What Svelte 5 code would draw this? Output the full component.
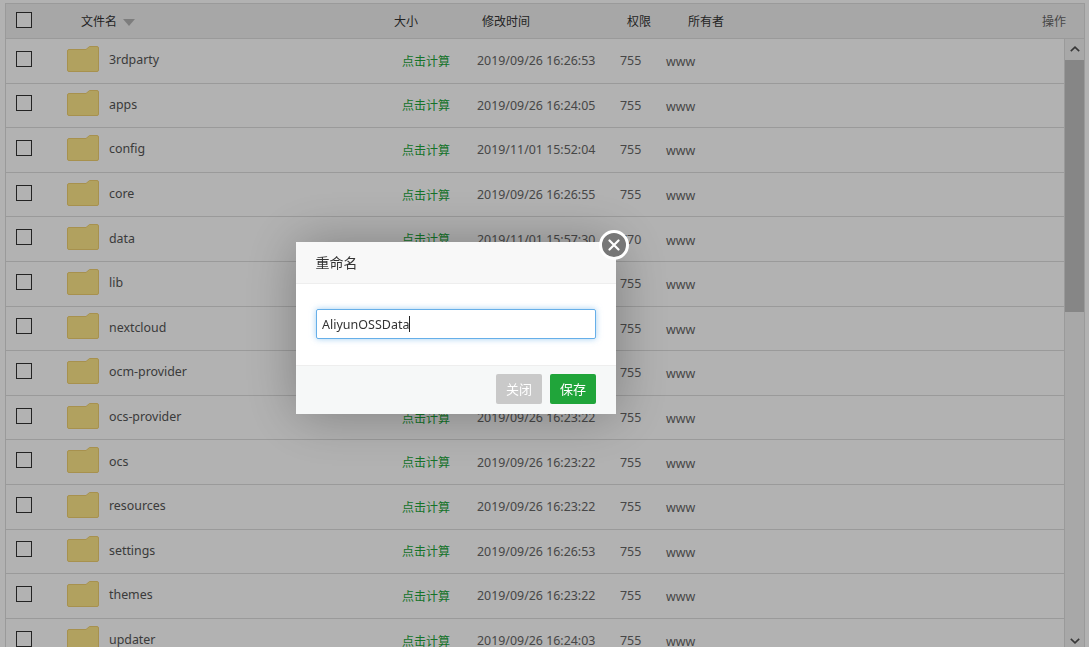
<script>
  const files = [
    { name: "3rdparty", time: "2019/09/26 16:26:53", perm: "755" },
    { name: "apps", time: "2019/09/26 16:24:05", perm: "755" },
    { name: "config", time: "2019/11/01 15:52:04", perm: "755" },
    { name: "core", time: "2019/09/26 16:26:55", perm: "755" },
    { name: "data", time: "2019/11/01 15:57:30", perm: "770" },
    { name: "lib", time: "2019/09/26 16:23:22", perm: "755" },
    { name: "nextcloud", time: "2019/09/26 16:23:22", perm: "755" },
    { name: "ocm-provider", time: "2019/09/26 16:23:22", perm: "755" },
    { name: "ocs-provider", time: "2019/09/26 16:23:22", perm: "755" },
    { name: "ocs", time: "2019/09/26 16:23:22", perm: "755" },
    { name: "resources", time: "2019/09/26 16:23:22", perm: "755" },
    { name: "settings", time: "2019/09/26 16:26:53", perm: "755" },
    { name: "themes", time: "2019/09/26 16:23:22", perm: "755" },
    { name: "updater", time: "2019/09/26 16:24:03", perm: "755" }
  ];
</script>

<div class="page">
  <div class="table">
    <div class="head">
      <span class="check"></span>
      <span class="h-name">文件名<i class="sort"></i></span>
      <span>大小</span>
      <span>修改时间</span>
      <span>权限</span>
      <span>所有者</span>
      <span class="h-ops">操作</span>
    </div>

    <div class="body">
      <div class="rows">
        {#each files as file}
          <div class="row">
            <span class="check"></span>
            <svg class="folder" viewBox="0 0 32 26" width="32" height="26">
              <path
                d="M2 3.5H19L22.5 .5H30A1.5 1.5 0 0 1 31.5 2V24A1.5 1.5 0 0 1 30 25.5H2A1.5 1.5 0 0 1 .5 24V5A1.5 1.5 0 0 1 2 3.5Z"
                fill="#fee789"
                stroke="#f0d070"
              />
            </svg>
            <span class="name">{file.name}</span>
            <span class="calc">点击计算</span>
            <span class="time">{file.time}</span>
            <span class="perm">{file.perm}</span>
            <span class="owner">www</span>
          </div>
        {/each}
      </div>

      <div class="scrollbar">
        <svg class="arrow" viewBox="0 0 10 6" width="10" height="6">
          <path d="M.8 5.2 5 1.2 9.2 5.2" fill="none" stroke="#505050" stroke-width="1.6" />
        </svg>
        <div class="thumb"></div>
        <svg class="arrow down" viewBox="0 0 10 6" width="10" height="6">
          <path d="M.8 .8 5 4.8 9.2 .8" fill="none" stroke="#505050" stroke-width="1.6" />
        </svg>
      </div>
    </div>
  </div>
</div>

<div class="overlay"></div>

<div class="modal">
  <div class="modal-title">重命名</div>
  <div class="modal-body">
    <div class="input">AliyunOSSData<span class="caret"></span></div>
  </div>
  <div class="modal-foot">
    <button class="btn close">关闭</button>
    <button class="btn save">保存</button>
  </div>
  <div class="x">
    <svg viewBox="0 0 12 12" width="12" height="12">
      <path d="M1.5 1.5 10.5 10.5M10.5 1.5 1.5 10.5" stroke="#fff" stroke-width="2.2" stroke-linecap="round" />
    </svg>
  </div>
</div>

<style>
  :global(body) {
    margin: 0;
    background: #fff;
    overflow: hidden;
  }

  .page {
    height: 647px;
    overflow: hidden;
    padding: 3px 4px 0 5px;
    box-sizing: border-box;
    font-family: "Noto Sans", "Noto Sans CJK SC", sans-serif;
    font-size: 12px;
    color: #666;
  }

  .table {
    border: 1px solid #ddd;
    border-bottom: 0;
  }

  .head {
    display: grid;
    grid-template-columns: 75px 313px 88px 145px 61px 1fr 42px;
    align-items: center;
    height: 34px;
    background: #f0f0f0;
    border-bottom: 1px solid #ddd;
    color: #333;
  }

  .head .check {
    margin-bottom: 3px;
  }

  .h-name {
    display: flex;
    align-items: center;
  }

  .sort {
    margin: 3px 0 0 6px;
    border: 6px solid transparent;
    border-top: 7px solid #b4b4b4;
    border-bottom: 0;
  }

  .h-ops {
    color: #666;
  }

  .body {
    display: flex;
  }

  .rows {
    flex: 1;
    min-width: 0;
  }

  .row {
    display: grid;
    grid-template-columns: 61px 42px 293px 75px 143px 46px 1fr;
    align-items: center;
    height: 43.6px;
    border-bottom: 1px solid #ddd;
    font-size: 12.4px;
  }

  .row .check {
    margin-bottom: 4px;
  }

  .check {
    display: block;
    width: 14px;
    height: 14px;
    margin-left: 10px;
    border: 1px solid #333;
    background: #fff;
  }

  .folder {
    display: block;
    margin-bottom: 4px;
  }

  .name {
    margin-bottom: 2px;
    color: #555;
  }

  .calc {
    font-size: 12px;
    color: #20a53a;
  }

  .owner {
    margin-top: 2px;
  }

  .scrollbar {
    flex: none;
    width: 19px;
    height: 608px;
    display: flex;
    flex-direction: column;
    align-items: center;
    border-left: 1px solid #ddd;
    background: #f1f1f1;
  }

  .arrow {
    flex: none;
    margin-top: 7px;
  }

  .thumb {
    align-self: stretch;
    height: 252px;
    margin-top: 8px;
    background: #c1c1c1;
  }

  .arrow.down {
    margin-top: auto;
    margin-bottom: 3px;
  }

  .overlay {
    position: fixed;
    inset: 0;
    background: rgba(0, 0, 0, 0.3);
  }

  .modal {
    position: fixed;
    left: 296px;
    top: 242px;
    width: 320px;
    height: 172px;
    display: flex;
    flex-direction: column;
    background: #fff;
    box-shadow: 1px 1px 50px rgba(0, 0, 0, 0.3);
    font-family: "Noto Sans", "Noto Sans CJK SC", sans-serif;
    font-size: 14px;
    color: #333;
  }

  .modal-title {
    flex: none;
    height: 41px;
    line-height: 42px;
    padding-left: 19.5px;
    background: #f8f8f8;
    border-bottom: 1px solid #eee;
  }

  .modal-body {
    flex: 1;
    padding: 25px 20px 0;
  }

  .input {
    height: 28px;
    padding-left: 5px;
    border: 1px solid #66afe9;
    border-radius: 2px;
    box-shadow: 0 0 6px rgba(102, 175, 233, 0.6);
    font-size: 12.5px;
    color: #333;
    display: flex;
    align-items: center;
  }

  .caret {
    width: 1px;
    height: 16px;
    background: #222;
  }

  .modal-foot {
    flex: none;
    height: 49px;
    display: flex;
    justify-content: flex-end;
    align-items: flex-start;
    gap: 8px;
    padding: 8px 20px 0;
    box-sizing: border-box;
    background: #f6f8f8;
    border-top: 1px solid #eee;
  }

  .btn {
    width: 46px;
    height: 30px;
    padding: 0 0 2px;
    border: 0;
    border-radius: 2px;
    color: #fff;
    font: inherit;
    font-size: 13px;
  }

  .close {
    background: #c9c9c9;
  }

  .save {
    background: #20a53a;
  }

  .x {
    position: absolute;
    left: 303px;
    top: -12px;
    width: 24px;
    height: 24px;
    display: flex;
    align-items: center;
    justify-content: center;
    background: #777;
    border: 3px solid #fff;
    border-radius: 50%;
  }
</style>
